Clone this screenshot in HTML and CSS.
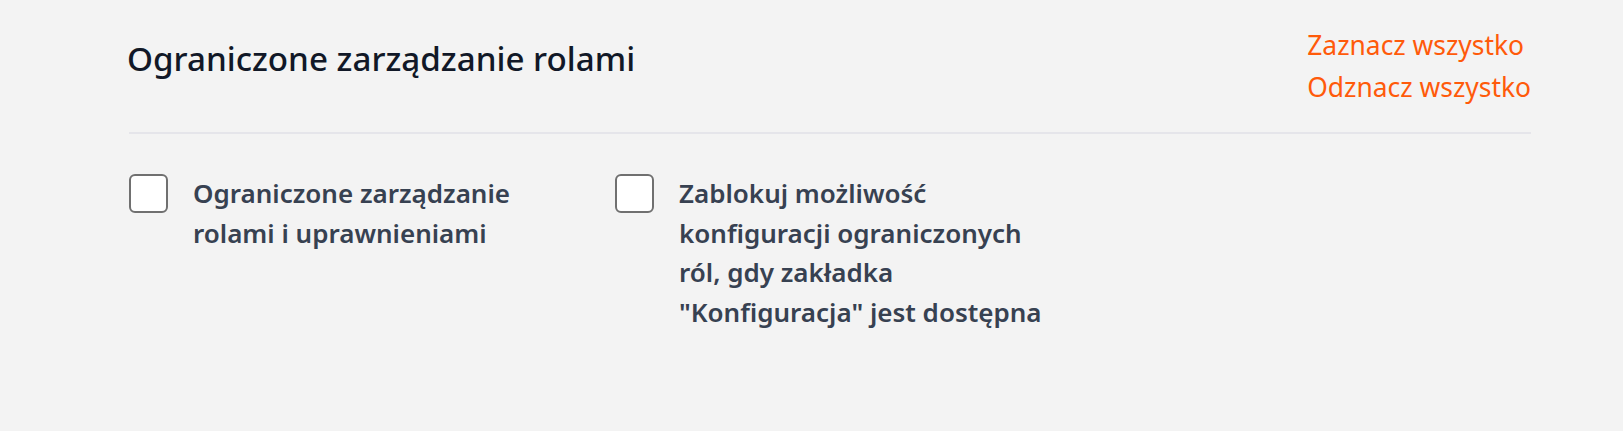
FILE: index.html
```html
<!DOCTYPE html>
<html lang="pl">
<head>
<meta charset="utf-8">
<title>Ograniczone zarządzanie rolami</title>
<link rel="stylesheet" href="styles.css">
</head>
<body>
<section class="panel">
  <header class="panel-header">
    <h2 class="panel-title">Ograniczone zarządzanie rolami</h2>
    <div class="panel-actions">
      <a href="#" class="action-link">Zaznacz wszystko</a>
      <a href="#" class="action-link">Odznacz wszystko</a>
    </div>
  </header>
  <div class="options">
    <label class="option">
      <input type="checkbox" class="option-box">
      <span class="option-text">Ograniczone zarządzanie rolami i uprawnieniami</span>
    </label>
    <label class="option">
      <input type="checkbox" class="option-box">
      <span class="option-text">Zablokuj możliwość konfiguracji ograniczonych ról, gdy zakładka "Konfiguracja" jest dostępna</span>
    </label>
  </div>
</section>
</body>
</html>
```
FILE: styles.css
```css
* { box-sizing: border-box; }
html, body {
  margin: 0;
  background: #f3f3f3;
}
body {
  font-family: "Noto Sans", "Open Sans", sans-serif;
  min-height: 431px;
}
.panel {
  padding: 25px 92px 40px 129px;
}
.panel-header {
  display: flex;
  justify-content: space-between;
  align-items: flex-start;
  padding-bottom: 24px;
  border-bottom: 2px solid #e5e5ea;
}
.panel-title {
  margin: 12px 0 0 -2px;
  font-size: 33.2px;
  line-height: 44px;
  font-weight: 500;
  color: #111827;
}
.panel-actions {
  display: flex;
  flex-direction: column;
  align-items: flex-start;
}
.action-link {
  font-size: 26.4px;
  line-height: 41.6px;
  color: #ff5a0a;
  text-decoration: none;
}
.options {
  display: grid;
  grid-template-columns: repeat(3, 440px);
  column-gap: 46px;
  padding-top: 40px;
}
.option {
  display: flex;
  align-items: flex-start;
  gap: 25px;
  cursor: pointer;
}
.option-box {
  appearance: none;
  -webkit-appearance: none;
  flex: 0 0 auto;
  width: 39px;
  height: 39px;
  margin: 0;
  background: #ffffff;
  border: 2px solid #707070;
  border-radius: 6px;
}
.option-text {
  font-size: 26px;
  line-height: 39.5px;
  font-weight: 600;
  color: #374151;
  max-width: 376px;
}
```
